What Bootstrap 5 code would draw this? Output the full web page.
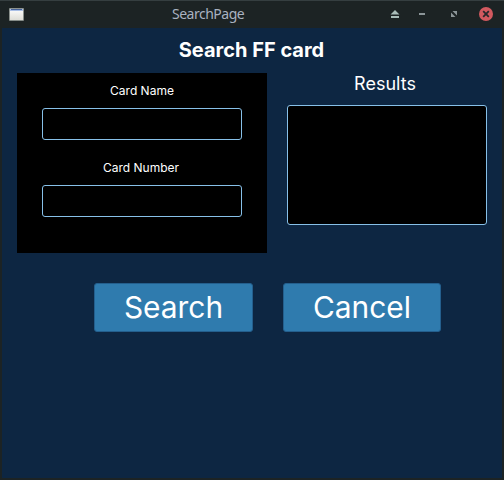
<!DOCTYPE html>
<html lang="en">
<head>
<meta charset="utf-8">
<meta name="viewport" content="width=device-width, initial-scale=1">
<title>SearchPage</title>
<link href="https://cdn.jsdelivr.net/npm/bootstrap@5.3.0/dist/css/bootstrap.min.css" rel="stylesheet">
<style>
body { font-family: Inter, sans-serif; background: #1c2324; color: #fff; }
.window { width: 504px; height: 480px; background: #1c2324; border-top: 1px solid #353e40; }
.titlebar { height: 27px; padding: 0 11px 0 9px; }
.titlebar svg { display: block; margin-bottom: 1px; }
.window-title { font: 14px/24px "Noto Sans", sans-serif; letter-spacing: -.5px; color: #a9b2c0; margin: 0 0 2px 148px; }
.client { margin: 0 2px 2px; height: 450px; background: #0d2642; }
.page-title { font-size: 20px; line-height: 24px; padding: 10px 1px 0 0; height: 45px; }
.panels { padding: 0 15px; gap: 20px; height: 180px; }
.search-form { width: 250px; height: 180px; background: #000; padding: 10px 25px 0; }
.search-form label { font-size: 12px; line-height: 15px; height: 25px; }
.search-form label[for="cardNumber"] { padding-right: 2px; }
.search-form .form-control, .result-list { background: #000; border: 1px solid #87c0e8; border-radius: 3px; color: #fff; }
.search-form .form-control { height: 32px; margin-bottom: 20px; }
.results { width: 200px; }
.results h2 { font-size: 18px; line-height: 22px; height: 32px; padding-right: 4px; }
.result-list { height: 120px; }
.actions { gap: 30px; padding: 30px 0 0 92px; }
.actions .btn { --bs-btn-bg: #2f7bae; --bs-btn-border-color: #245f8d; --bs-btn-padding-x: 0; --bs-btn-padding-y: 0; --bs-btn-border-radius: 3px; font-size: 29.9px; line-height: 46px; height: 49px; width: 158px; padding-bottom: 1px; }
.actions .btn:first-child { width: 159px; }
</style>
</head>
<body>
<div class="window">
  <header class="titlebar d-flex align-items-center">
    <svg width="15" height="13" viewBox="0 0 15 13"><defs><linearGradient id="g" x2="0" y2="1"><stop stop-color="#fff"/><stop offset="1" stop-color="#dcdcd6"/></linearGradient></defs><path fill="url(#g)" stroke="#8d9690" stroke-width=".6" d="M.5.5h14v12H.5z"/><path fill="#a9bfe6" d="M1 1h13v2H1z"/><path fill="#47639a" d="M2 1h11v1H2z"/></svg>
    <span class="window-title">SearchPage</span>
    <div class="d-flex align-items-center ms-auto">
      <svg width="104" height="14" viewBox="0 0 104 14">
        <path fill="#a8bcb8" d="M6 3l4.5 4.5h-9zM2 9h8v2H2z"/>
        <path fill="#8b9598" d="M30 6h6v2h-6z"/>
        <path fill="#8b9598" d="M63.5 4H68v4.5zM62 5.5l4.5 4.5H62z"/>
        <circle cx="97" cy="7" r="7" fill="#d2595f"/>
        <path stroke="#28282b" stroke-width="1.8" d="M94.2 4.2l5.6 5.6M99.8 4.2l-5.6 5.6"/>
      </svg>
    </div>
  </header>
  <main class="client">
    <h1 class="page-title fw-bold text-center m-0">Search FF card</h1>
    <div class="panels d-flex">
      <form class="search-form text-center">
        <label class="d-block" for="cardName">Card Name</label>
        <input class="form-control" id="cardName" type="text">
        <label class="d-block" for="cardNumber">Card Number</label>
        <input class="form-control" id="cardNumber" type="text">
      </form>
      <section class="results text-center">
        <h2 class="fw-normal m-0">Results</h2>
        <div class="result-list"></div>
      </section>
    </div>
    <div class="actions d-flex">
      <button class="btn btn-primary" type="button">Search</button>
      <button class="btn btn-primary" type="button">Cancel</button>
    </div>
  </main>
</div>
<script src="https://cdn.jsdelivr.net/npm/bootstrap@5.3.0/dist/js/bootstrap.bundle.min.js"></script>
</body>
</html>
